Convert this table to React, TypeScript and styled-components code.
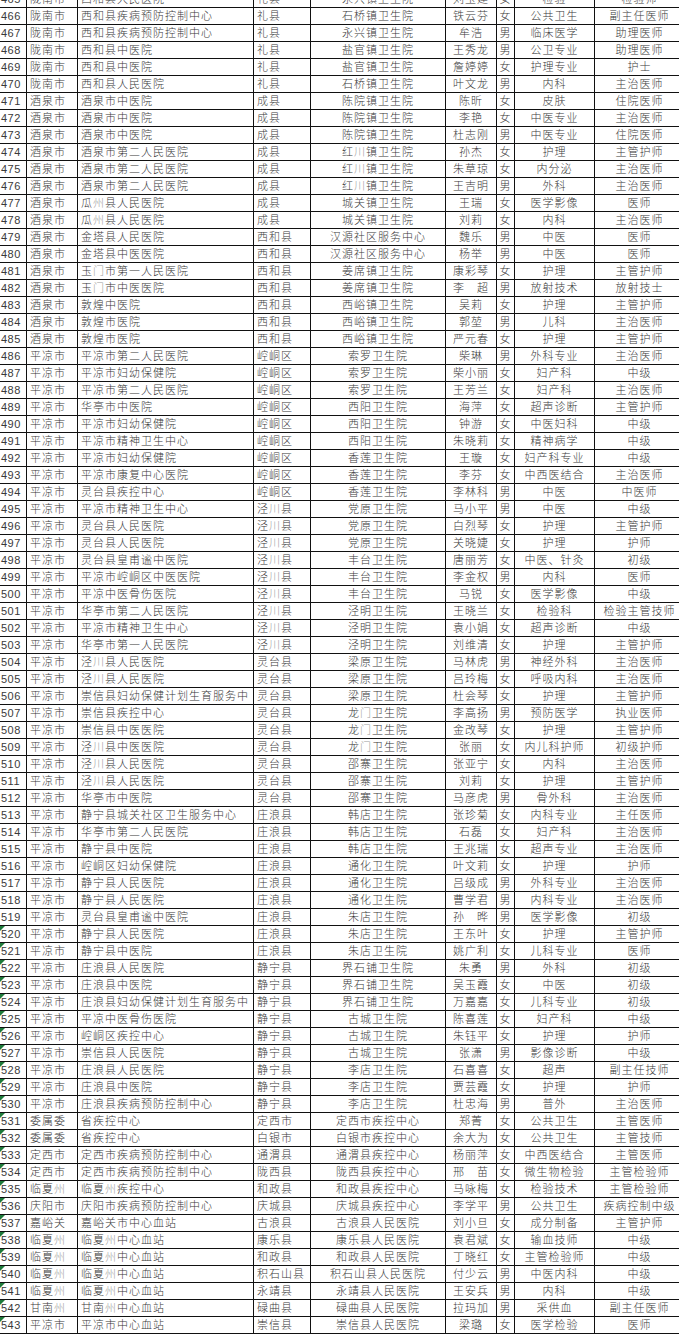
import React from "react"
import styled, { createGlobalStyle } from "styled-components"

type Row = [string, string, string, string, string, string, string, string]

// 序号 from 465; rows from 520 on carry the green error marker
const START = 465
const FLAG_FROM = 520

const rows: Row[] = [
  ["陇南市", "西和县人民医院", "礼县", "永兴镇卫生院", "刘玉建", "女", "检验", "检验师"],
  ["陇南市", "西和县疾病预防控制中心", "礼县", "石桥镇卫生院", "铁云芬", "女", "公共卫生", "副主任医师"],
  ["陇南市", "西和县疾病预防控制中心", "礼县", "永兴镇卫生院", "牟浩", "男", "临床医学", "助理医师"],
  ["陇南市", "西和县中医院", "礼县", "盐官镇卫生院", "王秀龙", "男", "公卫专业", "助理医师"],
  ["陇南市", "西和县中医院", "礼县", "盐官镇卫生院", "詹婷婷", "女", "护理专业", "护士"],
  ["陇南市", "西和县人民医院", "礼县", "石桥镇卫生院", "叶文龙", "男", "内科", "主治医师"],
  ["酒泉市", "酒泉市中医院", "成县", "陈院镇卫生院", "陈昕", "女", "皮肤", "住院医师"],
  ["酒泉市", "酒泉市中医院", "成县", "陈院镇卫生院", "李艳", "女", "中医专业", "主治医师"],
  ["酒泉市", "酒泉市中医院", "成县", "陈院镇卫生院", "杜志刚", "男", "中医专业", "住院医师"],
  ["酒泉市", "酒泉市第二人民医院", "成县", "红川镇卫生院", "孙杰", "女", "护理", "主管护师"],
  ["酒泉市", "酒泉市第二人民医院", "成县", "红川镇卫生院", "朱草琼", "女", "内分泌", "主治医师"],
  ["酒泉市", "酒泉市第二人民医院", "成县", "红川镇卫生院", "王吉明", "男", "外科", "主治医师"],
  ["酒泉市", "瓜州县人民医院", "成县", "城关镇卫生院", "王瑞", "女", "医学影像", "医师"],
  ["酒泉市", "瓜州县人民医院", "成县", "城关镇卫生院", "刘莉", "女", "内科", "主治医师"],
  ["酒泉市", "金塔县人民医院", "西和县", "汉源社区服务中心", "魏乐", "男", "中医", "医师"],
  ["酒泉市", "金塔县中医医院", "西和县", "汉源社区服务中心", "杨举", "男", "中医", "医师"],
  ["酒泉市", "玉门市第一人民医院", "西和县", "姜席镇卫生院", "康彩琴", "女", "护理", "主管护师"],
  ["酒泉市", "玉门市中医医院", "西和县", "姜席镇卫生院", "李　超", "男", "放射技术", "放射技士"],
  ["酒泉市", "敦煌中医院", "西和县", "西峪镇卫生院", "吴莉", "女", "护理", "主管护师"],
  ["酒泉市", "敦煌市医院", "西和县", "西峪镇卫生院", "郭堃", "男", "儿科", "主治医师"],
  ["酒泉市", "敦煌市医院", "西和县", "西峪镇卫生院", "严元春", "女", "护理", "主管护师"],
  ["平凉市", "平凉市第二人民医院", "崆峒区", "索罗卫生院", "柴琳", "男", "外科专业", "主治医师"],
  ["平凉市", "平凉市妇幼保健院", "崆峒区", "索罗卫生院", "柴小丽", "女", "妇产科", "中级"],
  ["平凉市", "平凉市第二人民医院", "崆峒区", "索罗卫生院", "王芳兰", "女", "妇产科", "主治医师"],
  ["平凉市", "华亭市中医院", "崆峒区", "西阳卫生院", "海萍", "女", "超声诊断", "主管护师"],
  ["平凉市", "平凉市妇幼保健院", "崆峒区", "西阳卫生院", "钟游", "女", "中医妇科", "中级"],
  ["平凉市", "平凉市精神卫生中心", "崆峒区", "西阳卫生院", "朱晓莉", "女", "精神病学", "中级"],
  ["平凉市", "平凉市妇幼保健院", "崆峒区", "香莲卫生院", "王璇", "女", "妇产科专业", "中级"],
  ["平凉市", "平凉市康复中心医院", "崆峒区", "香莲卫生院", "李芬", "女", "中西医结合", "主治医师"],
  ["平凉市", "灵台县疾控中心", "崆峒区", "香莲卫生院", "李林科", "男", "中医", "中医师"],
  ["平凉市", "平凉市精神卫生中心", "泾川县", "党原卫生院", "马小平", "男", "中医", "中级"],
  ["平凉市", "灵台县人民医院", "泾川县", "党原卫生院", "白烈琴", "女", "护理", "主管护师"],
  ["平凉市", "灵台县人民医院", "泾川县", "党原卫生院", "关晓婕", "女", "护理", "护师"],
  ["平凉市", "灵台县皇甫谧中医院", "泾川县", "丰台卫生院", "唐丽芳", "女", "中医、针灸", "初级"],
  ["平凉市", "平凉市崆峒区中医医院", "泾川县", "丰台卫生院", "李金权", "男", "内科", "医师"],
  ["平凉市", "平凉中医骨伤医院", "泾川县", "丰台卫生院", "马锐", "女", "医学影像", "中级"],
  ["平凉市", "华亭市第二人民医院", "泾川县", "泾明卫生院", "王晓兰", "女", "检验科", "检验主管技师"],
  ["平凉市", "平凉市精神卫生中心", "泾川县", "泾明卫生院", "袁小娟", "女", "超声诊断", "中级"],
  ["平凉市", "华亭市第一人民医院", "泾川县", "泾明卫生院", "刘维清", "女", "护理", "主管护师"],
  ["平凉市", "泾川县人民医院", "灵台县", "梁原卫生院", "马林虎", "男", "神经外科", "主治医师"],
  ["平凉市", "泾川县人民医院", "灵台县", "梁原卫生院", "吕玲梅", "女", "呼吸内科", "主治医师"],
  ["平凉市", "崇信县妇幼保健计划生育服务中", "灵台县", "梁原卫生院", "杜会琴", "女", "护理", "主管护师"],
  ["平凉市", "崇信县疾控中心", "灵台县", "龙门卫生院", "李高扬", "男", "预防医学", "执业医师"],
  ["平凉市", "崇信县中医医院", "灵台县", "龙门卫生院", "金改琴", "女", "护理", "主管护师"],
  ["平凉市", "泾川县中医医院", "灵台县", "龙门卫生院", "张丽", "女", "内儿科护师", "初级护师"],
  ["平凉市", "泾川县人民医院", "灵台县", "邵寨卫生院", "张亚宁", "女", "内科", "主治医师"],
  ["平凉市", "泾川县人民医院", "灵台县", "邵寨卫生院", "刘莉", "女", "护理", "主管护师"],
  ["平凉市", "华亭市中医院", "灵台县", "邵寨卫生院", "马彦虎", "男", "骨外科", "主治医师"],
  ["平凉市", "静宁县城关社区卫生服务中心", "庄浪县", "韩店卫生院", "张珍菊", "女", "内科专业", "主任医师"],
  ["平凉市", "华亭市第二人民医院", "庄浪县", "韩店卫生院", "石磊", "女", "妇产科", "主治医师"],
  ["平凉市", "静宁县中医院", "庄浪县", "韩店卫生院", "王兆瑞", "女", "超声专业", "主治医师"],
  ["平凉市", "崆峒区妇幼保健院", "庄浪县", "通化卫生院", "叶文莉", "女", "护理", "护师"],
  ["平凉市", "静宁县人民医院", "庄浪县", "通化卫生院", "吕级成", "男", "外科专业", "主治医师"],
  ["平凉市", "静宁县人民医院", "庄浪县", "通化卫生院", "曹学君", "男", "内科专业", "主治医师"],
  ["平凉市", "灵台县皇甫谧中医院", "庄浪县", "朱店卫生院", "孙　晔", "男", "医学影像", "初级"],
  ["平凉市", "静宁县人民医院", "庄浪县", "朱店卫生院", "王东叶", "女", "护理", "主管护师"],
  ["平凉市", "静宁县中医院", "庄浪县", "朱店卫生院", "姚广利", "女", "儿科专业", "医师"],
  ["平凉市", "庄浪县人民医院", "静宁县", "界石铺卫生院", "朱勇", "男", "外科", "初级"],
  ["平凉市", "庄浪县中医院", "静宁县", "界石铺卫生院", "吴玉霞", "女", "中医", "初级"],
  ["平凉市", "庄浪县妇幼保健计划生育服务中", "静宁县", "界石铺卫生院", "万嘉嘉", "女", "儿科专业", "初级"],
  ["平凉市", "平凉中医骨伤医院", "静宁县", "古城卫生院", "陈喜莲", "女", "妇产科", "中级"],
  ["平凉市", "崆峒区疾控中心", "静宁县", "古城卫生院", "朱钰平", "女", "护理", "护师"],
  ["平凉市", "崇信县人民医院", "静宁县", "古城卫生院", "张潇", "男", "影像诊断", "中级"],
  ["平凉市", "庄浪县人民医院", "静宁县", "李店卫生院", "石喜喜", "女", "超声", "副主任技师"],
  ["平凉市", "庄浪县中医院", "静宁县", "李店卫生院", "贾芸霞", "女", "护理", "护师"],
  ["平凉市", "庄浪县疾病预防控制中心", "静宁县", "李店卫生院", "杜忠海", "男", "普外", "主治医师"],
  ["委属委", "省疾控中心", "定西市", "定西市疾控中心", "郑菁", "女", "公共卫生", "主管医师"],
  ["委属委", "省疾控中心", "白银市", "白银市疾控中心", "余大为", "女", "公共卫生", "主管技师"],
  ["定西市", "定西市疾病预防控制中心", "通渭县", "通渭县疾控中心", "杨丽萍", "女", "中西医结合", "主管医师"],
  ["定西市", "定西市疾病预防控制中心", "陇西县", "陇西县疾控中心", "邢　苗", "女", "微生物检验", "主管检验师"],
  ["临夏州", "临夏州疾控中心", "和政县", "和政县疾控中心", "马咏梅", "女", "检验技术", "主管检验师"],
  ["庆阳市", "庆阳市疾病预防控制中心", "庆城县", "庆城县疾控中心", "李学平", "男", "公共卫生", "疾病控制中级"],
  ["嘉峪关", "嘉峪关市中心血站", "古浪县", "古浪县人民医院", "刘小旦", "女", "成分制备", "主管护师"],
  ["临夏州", "临夏州中心血站", "康乐县", "康乐县人民医院", "袁君斌", "女", "输血技师", "中级"],
  ["临夏州", "临夏州中心血站", "和政县", "和政县人民医院", "丁晓红", "女", "主管检验师", "中级"],
  ["临夏州", "临夏州中心血站", "积石山县", "积石山县人民医院", "付少云", "男", "中医内科", "中级"],
  ["临夏州", "临夏州中心血站", "永靖县", "永靖县人民医院", "王安兵", "男", "内科", "中级"],
  ["甘南州", "甘南州中心血站", "碌曲县", "碌曲县人民医院", "拉玛加", "男", "采供血", "副主任医师"],
  ["平凉市", "平凉市中心血站", "崇信县", "崇信县人民医院", "梁璐", "女", "医学检验", "医师"],
]

const widths = [27, 51, 176, 57, 135, 51, 18, 80, 90]

// thin-stroke characters come out pale in the scanned sheet
const soft = (text: string) =>
  text.split(/([川州门])/).map((part, i) =>
    /^[川州门]$/.test(part) ? <Faint key={i}>{part}</Faint> : part
  )

const App = () => {
  return (
    <>
      <GlobalStyle />
      <Sheet>
        <colgroup>
          {widths.map((w, i) => <col key={i} style={{ width: w }} />)}
        </colgroup>
        <tbody>
          {rows.map((r, i) => {
            const no = START + i
            return (
              <tr key={no}>
                <NumCell $flag={no >= FLAG_FROM}>{no}</NumCell>
                <LeftCell>{soft(r[0])}</LeftCell>
                <LeftCell>{soft(r[1])}</LeftCell>
                <LeftCell>{soft(r[2])}</LeftCell>
                <MidCell>{soft(r[3])}</MidCell>
                <MidCell>{r[4]}</MidCell>
                <MidCell>{r[5]}</MidCell>
                <MidCell>{r[6]}</MidCell>
                <MidCell>{r[7]}</MidCell>
              </tr>
            )
          })}
        </tbody>
      </Sheet>
    </>
  )
}

export default App

const GlobalStyle = createGlobalStyle`
    html, body {
        margin: 0;
        padding: 0;
        background: #fff;
        overflow: hidden;
    }
`

const Sheet = styled.table`
    border-collapse: collapse;
    table-layout: fixed;
    width: 685px;
    margin-top: -10px;
    margin-left: -1px;
    font-family: "Liberation Sans", "Noto Sans CJK SC", sans-serif;
    font-size: 11px;
    font-weight: 300;
    letter-spacing: 1px;
    color: #3a3a3a;
`

const Cell = styled.td`
    height: 16px;
    padding: 0;
    line-height: 16px;
    border: 1px solid #111;
    white-space: nowrap;
    overflow: hidden;
`

const NumCell = styled(Cell)<{ $flag?: boolean }>`
    position: relative;
    padding-left: 1px;
    letter-spacing: 0.5px;
    text-align: left;

    &::before {
        content: "";
        display: ${(p) => (p.$flag ? "block" : "none")};
        position: absolute;
        top: 0;
        left: 0;
        border-top: 5px solid #1d7a3a;
        border-right: 5px solid transparent;
    }
`

const LeftCell = styled(Cell)`
    padding-left: 3px;
    text-align: left;
`

const MidCell = styled(Cell)`
    text-align: center;
`

const Faint = styled.span`
    color: #a0a0a0;
`
